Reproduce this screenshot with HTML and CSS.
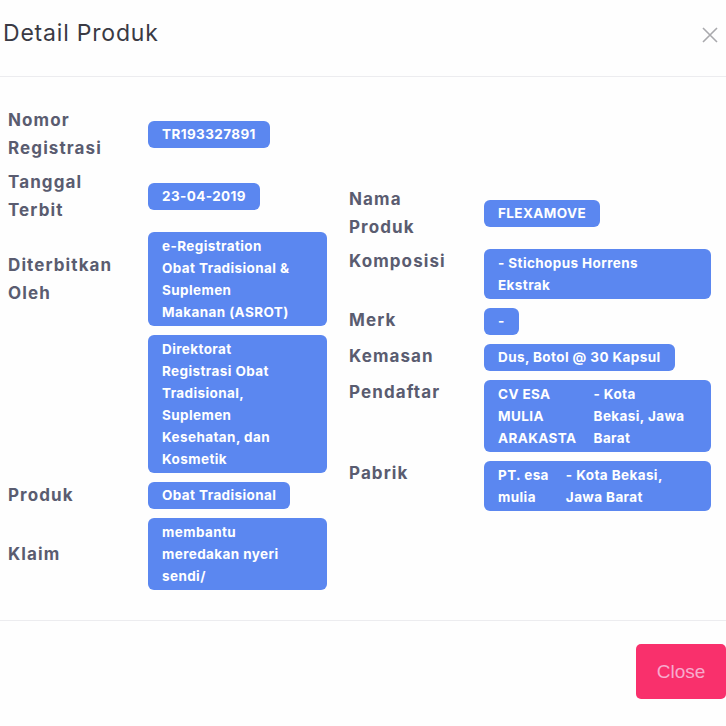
FILE: index.html
```html
<!DOCTYPE html>
<html lang="id">
<head>
<meta charset="utf-8">
<title>Detail Produk</title>
<link rel="stylesheet" href="styles.css">
</head>
<body>
<div class="modal">
  <div class="modal-header">
    <h2 class="modal-title">Detail Produk</h2>
    <button class="btn-x" aria-label="Close">
      <svg width="16" height="16" viewBox="0 0 16 16"><path d="M1 1 L15 15 M15 1 L1 15" stroke="#a9a9ad" stroke-width="1.6" fill="none"/></svg>
    </button>
  </div>
  <div class="modal-body">
    <div class="col col-left">
      <table class="info">
        <tr><td class="lbl">Nomor<br>Registrasi</td><td class="val"><span class="badge">TR193327891</span></td></tr>
        <tr><td class="lbl">Tanggal<br>Terbit</td><td class="val"><span class="badge">23-04-2019</span></td></tr>
        <tr><td class="lbl">Diterbitkan<br>Oleh</td><td class="val"><span class="badge wide">e-Registration<br>Obat Tradisional &amp;<br>Suplemen<br>Makanan (ASROT)</span></td></tr>
        <tr><td class="lbl"></td><td class="val"><span class="badge wide">Direktorat<br>Registrasi Obat<br>Tradisional,<br>Suplemen<br>Kesehatan, dan<br>Kosmetik</span></td></tr>
        <tr><td class="lbl">Produk</td><td class="val"><span class="badge">Obat Tradisional</span></td></tr>
        <tr><td class="lbl">Klaim</td><td class="val"><span class="badge wide">membantu<br>meredakan nyeri<br>sendi/</span></td></tr>
      </table>
    </div>
    <div class="col col-right">
      <table class="info info-right">
        <tr><td class="lbl mid">Nama<br>Produk</td><td class="val"><span class="badge">FLEXAMOVE</span></td></tr>
        <tr><td class="lbl">Komposisi</td><td class="val"><span class="badge wide2">- Stichopus Horrens<br>Ekstrak</span></td></tr>
        <tr><td class="lbl">Merk</td><td class="val"><span class="badge">-</span></td></tr>
        <tr><td class="lbl">Kemasan</td><td class="val"><span class="badge">Dus, Botol @ 30 Kapsul</span></td></tr>
        <tr><td class="lbl">Pendaftar</td><td class="val"><span class="badge wide2 split"><span>CV ESA<br>MULIA<br>ARAKASTA</span><span>- Kota<br>Bekasi, Jawa<br>Barat</span></span></td></tr>
        <tr><td class="lbl">Pabrik</td><td class="val"><span class="badge wide2 split"><span>PT. esa<br>mulia</span><span>- Kota Bekasi,<br>Jawa Barat</span></span></td></tr>
      </table>
    </div>
  </div>
  <div class="modal-footer">
    <button class="btn-close">Close</button>
  </div>
</div>
</body>
</html>
```

FILE: styles.css
```css
* { box-sizing: border-box; }
html, body {
  margin: 0;
  padding: 0;
  background: #fefefe;
}
body {
  font-family: Inter, "Noto Sans", sans-serif;
  width: 726px;
  height: 726px;
  overflow: hidden;
}
.modal {
  width: 726px;
  display: flex;
  flex-direction: column;
}
.modal-header {
  height: 77px;
  border-bottom: 1px solid #ececef;
  display: flex;
  align-items: flex-start;
  justify-content: space-between;
  padding: 17px 8px 0 3px;
}
.modal-title {
  margin: 0;
  font-size: 23px;
  line-height: 32px;
  font-weight: 400;
  color: #3a3a44;
  letter-spacing: 0.8px;
}
.btn-x {
  border: 0;
  background: none;
  padding: 0;
  margin-top: 10px;
  width: 16px;
  height: 16px;
  display: block;
}
.btn-x svg { display: block; }
.modal-body {
  height: 544px;
  border-bottom: 1px solid #ececef;
  display: flex;
  align-items: center;
}
.col-left {
  width: 341px;
  padding-left: 8px;
}
.col-right {
  flex: 1;
  padding-left: 8px;
}
.info {
  border-collapse: collapse;
}
.info td {
  vertical-align: middle;
}
.lbl {
  width: 140px;
  padding: 3px 0;
  font-size: 17px;
  line-height: 28px;
  font-weight: 700;
  color: #5a5c70;
  letter-spacing: 1.1px;
}
.info-right .lbl { width: 135px; }
.info-right td.lbl { vertical-align: top; }
.info-right td.lbl.mid { vertical-align: middle; }
.val {
  padding: 4.5px 0;
}
.badge {
  display: inline-block;
  background: #5b87f0;
  color: #fff;
  font-size: 13.5px;
  line-height: 22px;
  font-weight: 700;
  letter-spacing: 0.4px;
  padding: 2.5px 14px;
  border-radius: 6px;
  vertical-align: middle;
}
.badge.wide { width: 179px; padding-top: 3px; padding-bottom: 3px; }
.badge.wide2 { width: 227px; padding-top: 3px; padding-bottom: 3px; }
.badge.split {
  display: flex;
  gap: 17px;
}
.modal-footer {
  height: 104px;
  display: flex;
  justify-content: flex-end;
  padding-top: 23px;
}
.btn-close {
  width: 90px;
  height: 55px;
  border: 0;
  border-radius: 5px;
  background: #f9306c;
  color: #f7abcc;
  font-family: "Liberation Sans", Arial, sans-serif;
  font-size: 19px;
  padding: 0;
}
```
